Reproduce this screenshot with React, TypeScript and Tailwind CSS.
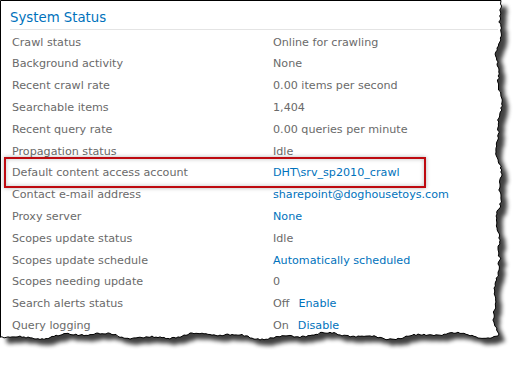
import React from 'react'

type Part = { text: string; link?: boolean }
type Row = { label: string; value: Part[] }

const rows: Row[] = [
  { label: 'Crawl status', value: [{ text: 'Online for crawling' }] },
  { label: 'Background activity', value: [{ text: 'None' }] },
  { label: 'Recent crawl rate', value: [{ text: '0.00 items per second' }] },
  { label: 'Searchable items', value: [{ text: '1,404' }] },
  { label: 'Recent query rate', value: [{ text: '0.00 queries per minute' }] },
  { label: 'Propagation status', value: [{ text: 'Idle' }] },
  { label: 'Default content access account', value: [{ text: 'DHT\\srv_sp2010_crawl', link: true }] },
  { label: 'Contact e-mail address', value: [{ text: 'sharepoint@doghousetoys.com', link: true }] },
  { label: 'Proxy server', value: [{ text: 'None', link: true }] },
  { label: 'Scopes update status', value: [{ text: 'Idle' }] },
  { label: 'Scopes update schedule', value: [{ text: 'Automatically scheduled', link: true }] },
  { label: 'Scopes needing update', value: [{ text: '0' }] },
  { label: 'Search alerts status', value: [{ text: 'Off' }, { text: 'Enable', link: true }] },
  { label: 'Query logging', value: [{ text: 'On' }, { text: 'Disable', link: true }] },
]

// deterministic jitter for the torn paper edge
function jitter(i: number) {
  const s = Math.sin(i * 12.9898 + 78.233) * 43758.5453
  return s - Math.floor(s) - 0.5
}

function tornPath() {
  const pts: string[] = ['M0.5,0.5', 'L501,0.5']
  for (let y = 2; y <= 336; y += 2) {
    const x = 499 + 2 * Math.sin(y / 13) + 1.4 * Math.sin(y / 5.3 + 1) + 2 * jitter(y) - (y > 260 ? 3 : 0)
    pts.push(`L${x.toFixed(1)},${y}`)
  }
  for (let x = 494; x >= 0; x -= 2) {
    const y = 336 + 2.2 * Math.sin(x / 19) + 1.4 * Math.sin(x / 7 + 2) + 1.6 * jitter(x + 500)
    pts.push(`L${x},${y.toFixed(1)}`)
  }
  pts.push('L0.5,337 Z')
  return pts.join(' ')
}

const edge = tornPath()

export default function App() {
  return (
    <div className="relative w-[526px] h-[365px] bg-white overflow-hidden font-['DejaVu_Sans',sans-serif]">
      <svg className="absolute inset-0" width="526" height="365" viewBox="0 0 526 365">
        <defs>
          <filter id="tear" x="-5%" y="-5%" width="115%" height="115%">
            <feGaussianBlur stdDeviation="2.2" />
          </filter>
        </defs>
        <path d={edge} fill="#000" opacity="0.75" transform="translate(6,6)" filter="url(#tear)" />
        <path d={edge} fill="#fff" stroke="#000" strokeWidth="1" />
      </svg>

      <div className="relative pl-[10px] w-[498px]">
        <div className="h-[30px] pt-[10px] border-b border-[#e4e4e4] text-[13.3px] leading-[15px] text-[#0072bc]">
          System Status
        </div>
        <div className="pt-[2px] pl-[2px] text-[11.15px] text-[#6a6a6a]">
          {rows.map((row) => (
            <div key={row.label} className="flex items-center h-[21.8px]">
              <div className="w-[261px] shrink-0">{row.label}</div>
              <div className="flex">
                {row.value.map((part, i) => (
                  <span key={i} className={`${part.link ? 'text-[#0072bc]' : ''} ${i > 0 ? 'ml-[9px]' : ''}`}>
                    {part.text}
                  </span>
                ))}
              </div>
            </div>
          ))}
        </div>
      </div>

      <div className="absolute left-[4px] top-[157px] w-[422px] h-[31px] border-2 border-[#be0a10] shadow-[0_0_4px_rgba(0,0,0,0.3),inset_0_0_4px_rgba(0,0,0,0.25)]" />
    </div>
  )
}
